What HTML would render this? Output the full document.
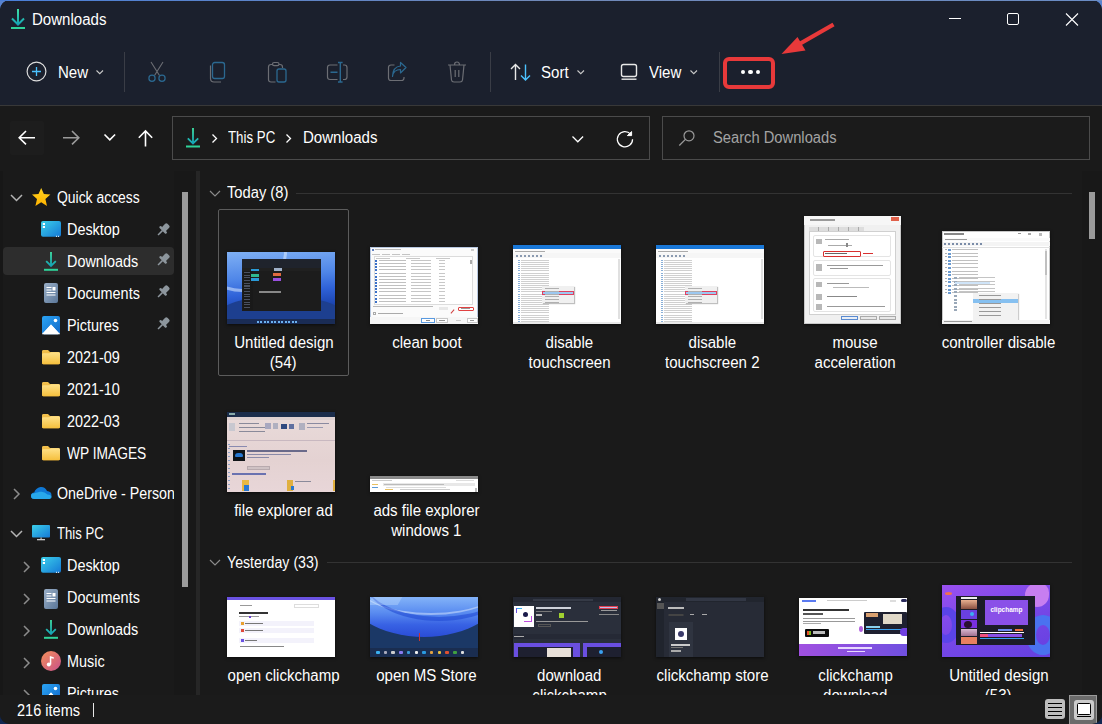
<!DOCTYPE html><html><head><meta charset="utf-8"><style>
*{margin:0;padding:0;box-sizing:border-box}
html,body{width:1102px;height:724px;overflow:hidden;background:linear-gradient(180deg,#5a84d0 0,#4a78c8 40px,#15305e 680px,#112650 724px)}
body{font-family:"Liberation Sans",sans-serif;color:#fff;position:relative}
.win{position:absolute;left:0;top:0;width:1102px;height:724px;border-radius:10px;overflow:hidden;background:#1a1a1a}
.a{position:absolute}
.t{position:absolute;white-space:nowrap;font-size:16px;line-height:16px;color:#fff;transform-origin:left top;transform:scaleX(.94)}
.c{position:absolute;white-space:nowrap;font-size:16px;line-height:20px;color:#fff;text-align:center}
.c span{display:inline-block;transform:scaleX(.94)}
.sep{position:absolute;width:1px;background:#3a3d46}
svg{position:absolute;overflow:visible}
.th{position:absolute;overflow:hidden;box-shadow:0 1px 3px rgba(0,0,0,.6)}
</style></head><body>
<div class="win">
<div class="a" style="left:0px;top:0px;width:1102px;height:105px;background:#1b202d;"></div>
<div class="a" style="left:0px;top:105px;width:1102px;height:1px;background:#383838;"></div>
<svg style="left:0;top:0" width="1" height="1"><defs><linearGradient id="dg" x1="0" y1="0" x2="0" y2="1"><stop offset="0" stop-color="#3fe3a4"/><stop offset="1" stop-color="#14a3b5"/></linearGradient><linearGradient id="deskg" x1="0" y1="0" x2="1" y2="1"><stop offset="0" stop-color="#3cd0ea"/><stop offset="1" stop-color="#1478d6"/></linearGradient><linearGradient id="docg" x1="0" y1="0" x2="1" y2="1"><stop offset="0" stop-color="#9bb0c8"/><stop offset="1" stop-color="#5a7698"/></linearGradient><linearGradient id="picg" x1="0" y1="0" x2="1" y2="1"><stop offset="0" stop-color="#2aa4f4"/><stop offset="1" stop-color="#1268c8"/></linearGradient><linearGradient id="fold" x1="0" y1="0" x2="0" y2="1"><stop offset="0" stop-color="#ffe28a"/><stop offset="1" stop-color="#f5bf3c"/></linearGradient><linearGradient id="foldb" x1="0" y1="0" x2="0" y2="1"><stop offset="0" stop-color="#f2c14e"/><stop offset="1" stop-color="#e8a92a"/></linearGradient><linearGradient id="musg" x1="0" y1="0" x2="1" y2="1"><stop offset="0" stop-color="#f5905a"/><stop offset="1" stop-color="#c8508a"/></linearGradient><linearGradient id="starg" x1="0" y1="0" x2="0" y2="1"><stop offset="0" stop-color="#ffd21f"/><stop offset="1" stop-color="#ffb300"/></linearGradient><linearGradient id="cloudg" x1="0" y1="0" x2="0" y2="1"><stop offset="0" stop-color="#0a6fd0"/><stop offset="1" stop-color="#2f9ef0"/></linearGradient></defs></svg>
<svg style="left:0px;top:0px" width="40" height="40" viewBox="0 0 40 40"><path d="M18 9V24M12 18.5L18 24.5L24 18.5" stroke="url(#dg)" stroke-width="2" fill="none"/><rect x="11" y="27" width="14" height="2" fill="#2fd39a"/></svg>
<div class="t" style="left:32px;top:12.30px">Downloads</div>
<div class="a" style="left:949px;top:18px;width:12px;height:1px;background:#fff;"></div>
<div class="a" style="left:1007px;top:13px;width:12px;height:12px;border:1px solid #fff;border-radius:2px"></div>
<svg style="left:1065px;top:12px" width="16" height="16" viewBox="0 0 16 16"><path d="M1 1.5L13 13.5M13 1.5L1 13.5" stroke="#fff" stroke-width="1.1"/></svg>
<svg style="left:26px;top:61px" width="22" height="22" viewBox="0 0 22 22"><circle cx="10.5" cy="10.5" r="9.4" stroke="#dcdcdc" stroke-width="1.2" fill="none"/><path d="M10.5 6V15M6 10.5H15" stroke="#4cc2ff" stroke-width="1.3"/></svg>
<div class="t" style="left:57.5px;top:65.30px">New</div>
<svg style="left:95.5px;top:70px" width="9" height="6" viewBox="0 0 9 6"><path d="M0.5 0.5L3.75 3.75L7 0.5" stroke="#c8c8c8" stroke-width="1.1" fill="none"/></svg>
<div class="sep" style="left:124px;top:52px;height:40px"></div>
<svg style="left:146px;top:60px" width="24" height="24" viewBox="0 0 24 24"><path d="M5 2L13.5 15.5M17 2L8.5 15.5" stroke="#6c6e74" stroke-width="1.1" fill="none"/><circle cx="6" cy="18.3" r="3.1" stroke="#2b6890" stroke-width="1.25" fill="none"/><circle cx="16" cy="18.3" r="3.1" stroke="#2b6890" stroke-width="1.25" fill="none"/></svg>
<svg style="left:207px;top:60px" width="24" height="24" viewBox="0 0 24 24"><path d="M3.5 5.5V18.5Q3.5 22 7 22H14" stroke="#6c6e74" stroke-width="1.2" fill="none"/><rect x="5.5" y="2.5" width="12" height="16" rx="2.2" stroke="#2b6890" stroke-width="1.3" fill="none"/></svg>
<svg style="left:267px;top:60px" width="24" height="24" viewBox="0 0 24 24"><path d="M8.5 22H4Q1.5 22 1.5 19.5V7Q1.5 4.5 4 4.5H5.5M12 4.5H13Q15.5 4.5 15.5 7V8" stroke="#6c6e74" stroke-width="1.2" fill="none"/><rect x="5.5" y="2.5" width="6.5" height="3.2" rx="1.6" stroke="#6c6e74" stroke-width="1.2" fill="none"/><rect x="10" y="9" width="9" height="13" rx="2" stroke="#2b6890" stroke-width="1.3" fill="none"/></svg>
<svg style="left:326px;top:60px" width="26" height="24" viewBox="0 0 26 24"><path d="M11.5 19.5H4Q1.5 19.5 1.5 17V7.5Q1.5 5 4 5H11.5M17 5H18.5Q21 5 21 7.5V17Q21 19.5 18.5 19.5H17" stroke="#6c6e74" stroke-width="1.2" fill="none"/><path d="M14.3 2.5V22M12 2.5H16.6M12 22H16.6M4.5 12.2H11.5" stroke="#2b6890" stroke-width="1.4" fill="none"/></svg>
<svg style="left:387px;top:60px" width="24" height="24" viewBox="0 0 24 24"><path d="M7.5 5H4Q1.5 5 1.5 7.5V18Q1.5 20.5 4 20.5H14.5Q17 20.5 17 18V17" stroke="#6c6e74" stroke-width="1.2" fill="none"/><path d="M5.5 16.5Q6.5 9.5 13.5 9.5V13L19 7.5L13.5 2.5V6Q6 6.5 5.5 16.5Z" stroke="#2b6890" stroke-width="1.2" fill="none" stroke-linejoin="round"/></svg>
<svg style="left:447px;top:60px" width="24" height="24" viewBox="0 0 24 24"><path d="M1 5H19M7.5 5Q7.5 2 10 2Q12.5 2 12.5 5M3 5L4.5 20Q4.8 22 7 22H13Q15.2 22 15.5 20L17 5M8.2 10V17M11.8 10V17" stroke="#6c6e74" stroke-width="1.2" fill="none"/></svg>
<div class="sep" style="left:490px;top:52px;height:40px"></div>
<svg style="left:509px;top:62px" width="26" height="20" viewBox="0 0 26 20"><path d="M6.5 18V2.5M2 7L6.5 2.5L11 7" stroke="#e8e8e8" stroke-width="1.4" fill="none"/><path d="M16.5 2.5V18M12 13.5L16.5 18L21 13.5" stroke="#4cc2ff" stroke-width="1.4" fill="none"/></svg>
<div class="t" style="left:541px;top:65.30px">Sort</div>
<svg style="left:576.5px;top:70px" width="9" height="6" viewBox="0 0 9 6"><path d="M0.5 0.5L3.75 3.75L7 0.5" stroke="#c8c8c8" stroke-width="1.1" fill="none"/></svg>
<svg style="left:619px;top:62px" width="20" height="20" viewBox="0 0 20 20"><rect x="2.5" y="2.5" width="15" height="12" rx="2" stroke="#e8e8e8" stroke-width="1.4" fill="none"/><path d="M2.5 17.2H17.5" stroke="#e8e8e8" stroke-width="1.4"/></svg>
<div class="t" style="left:649px;top:65.30px">View</div>
<svg style="left:689.5px;top:70px" width="9" height="6" viewBox="0 0 9 6"><path d="M0.5 0.5L3.75 3.75L7 0.5" stroke="#c8c8c8" stroke-width="1.1" fill="none"/></svg>
<div class="sep" style="left:719px;top:52px;height:40px"></div>
<div class="a" style="left:723px;top:57px;width:52px;height:32px;border:4px solid #e8393a;border-radius:6px"></div>
<div class="a" style="left:740.5px;top:69.8px;width:4.6px;height:4.6px;border-radius:50%;background:#fff"></div>
<div class="a" style="left:748.1px;top:69.8px;width:4.6px;height:4.6px;border-radius:50%;background:#fff"></div>
<div class="a" style="left:755.9000000000001px;top:69.8px;width:4.6px;height:4.6px;border-radius:50%;background:#fff"></div>
<svg style="left:0px;top:0px" width="1102" height="100" viewBox="0 0 1102 100"><path d="M833.5 24.5L795 46.5" stroke="#e8393a" stroke-width="4.2" stroke-linecap="butt"/><path d="M781.5 54L797.5 37L805.5 50.5Z" fill="#e8393a"/></svg>
<div class="a" style="left:10px;top:121px;width:34px;height:34px;background:#1d1d1d;border-radius:2px"></div>
<svg style="left:16px;top:128px" width="22" height="22" viewBox="0 0 22 22"><path d="M19 9.7H3.5M10 3L3.2 9.7L10 16.4" stroke="#fff" stroke-width="1.6" fill="none"/></svg>
<svg style="left:60px;top:128px" width="22" height="22" viewBox="0 0 22 22"><path d="M3 9.7H18.5M12 3L18.8 9.7L12 16.4" stroke="#9a9a9a" stroke-width="1.6" fill="none"/></svg>
<svg style="left:102px;top:132px" width="16" height="12" viewBox="0 0 16 12"><path d="M2.5 2.5L7.8 7.8L13.1 2.5" stroke="#fff" stroke-width="1.6" fill="none"/></svg>
<svg style="left:136px;top:128px" width="20" height="22" viewBox="0 0 20 22"><path d="M9.5 18.5V3M2.8 9.7L9.5 3L16.2 9.7" stroke="#fff" stroke-width="1.6" fill="none"/></svg>
<div class="a" style="left:172px;top:116px;width:478px;height:44px;border:1px solid #4b4b4b;background:#1b1b1b"></div>
<svg style="left:184px;top:126px" width="20" height="24" viewBox="0 0 20 24"><path d="M9 2V17.5M3.8 12.3L9 17.5L14.2 12.3" stroke="url(#dg)" stroke-width="1.8" fill="none"/><rect x="2" y="19.5" width="14" height="2" fill="#2fd39a"/></svg>
<svg style="left:210px;top:133px" width="10" height="12" viewBox="0 0 10 12"><path d="M2.5 1.5L6.5 5.5L2.5 9.5" stroke="#fff" stroke-width="1.3" fill="none"/></svg>
<div class="t" style="left:228px;top:130.30px;transform:scaleX(0.83)">This PC</div>
<svg style="left:284px;top:133px" width="10" height="12" viewBox="0 0 10 12"><path d="M2.5 1.5L6.5 5.5L2.5 9.5" stroke="#fff" stroke-width="1.3" fill="none"/></svg>
<div class="t" style="left:302.5px;top:130.30px">Downloads</div>
<svg style="left:570px;top:133.5px" width="16" height="12" viewBox="0 0 16 12"><path d="M2.5 2.5L7.8 7.8L13.1 2.5" stroke="#fff" stroke-width="1.3" fill="none"/></svg>
<svg style="left:615px;top:129px" width="22" height="22" viewBox="0 0 22 22"><path d="M17.55 10.2A7.6 7.6 0 1 1 15.6 5.2" stroke="#fff" stroke-width="1.25" fill="none"/><path d="M16.6 2.6V6.6H12.4Z" stroke="#fff" stroke-width="1" fill="#fff" stroke-linejoin="round"/></svg>
<div class="a" style="left:662px;top:116px;width:428px;height:44px;border:1px solid #4b4b4b;background:#1b1b1b"></div>
<svg style="left:676px;top:128px" width="22" height="22" viewBox="0 0 22 22"><circle cx="13" cy="7.8" r="5" stroke="#9a9a9a" stroke-width="1.2" fill="none"/><path d="M9.4 11.4L3.3 17.5" stroke="#9a9a9a" stroke-width="1.3"/></svg>
<div class="t" style="left:713px;top:130.30px;color:#a3a3a3;transform:scaleX(0.92)">Search Downloads</div>
<div class="a" style="left:0px;top:171px;width:3px;height:524px;background:#171717;"></div>
<div class="a" style="left:174px;top:171px;width:22px;height:524px;background:#181818;"></div>
<div class="a" style="left:182px;top:192px;width:6px;height:395px;background:#9b9b9b;"></div>
<div class="a" style="left:196px;top:171px;width:4px;height:524px;background:#262626;"></div>
<div class="a" style="left:3px;top:247px;width:171px;height:28px;background:#2d2d2d;border-radius:4px"></div>
<svg style="left:10px;top:194px" width="14" height="8" viewBox="0 0 14 8"><path d="M1 1L6.5 6.5L12 1" stroke="#b4b4b4" stroke-width="1.5" fill="none"/></svg>
<svg style="left:32px;top:188px" width="19" height="19" viewBox="0 0 19 19"><path d="M9.2 0L11.9 6.1L18.4 6.6L13.4 11L15 17.9L9.2 14.3L3.4 17.9L5 11L0 6.6L6.5 6.1Z" fill="url(#starg)"/></svg>
<div class="t" style="left:56.5px;top:190.30px;transform:scaleX(0.87)">Quick access</div>
<svg style="left:41px;top:221px" width="20" height="16" viewBox="0 0 20 16"><rect x="0" y="0" width="20" height="15.8" rx="2" fill="url(#deskg)"/><rect x="1.8" y="2" width="2.2" height="2" fill="#fff"/><rect x="1.8" y="5" width="2.2" height="2" fill="#fff"/><rect x="15" y="14.8" width="1" height="1" fill="#fff"/><rect x="17" y="14.8" width="1" height="1" fill="#fff"/></svg>
<div class="t" style="left:66.5px;top:222.30px;transform:scaleX(0.9)">Desktop</div>
<svg style="left:156px;top:222.5px" width="14" height="14" viewBox="0 0 14 14"><g transform="rotate(45 7 7)" fill="#8d969d"><rect x="4.2" y="-0.5" width="5.6" height="7" rx="1.6"/><rect x="2.2" y="5.6" width="9.6" height="2.4" rx="1"/><rect x="6.25" y="7.5" width="1.5" height="6.5"/></g></svg>
<svg style="left:44px;top:251px" width="14" height="20" viewBox="0 0 14 20"><path d="M7 1V15M2.2 10.2L7 15L11.8 10.2" stroke="url(#dg)" stroke-width="1.8" fill="none"/><rect x="0" y="17.8" width="14" height="2" fill="#2fd39a"/></svg>
<div class="t" style="left:66.5px;top:254.30px;transform:scaleX(0.9)">Downloads</div>
<svg style="left:156px;top:252.5px" width="14" height="14" viewBox="0 0 14 14"><g transform="rotate(45 7 7)" fill="#8d969d"><rect x="4.2" y="-0.5" width="5.6" height="7" rx="1.6"/><rect x="2.2" y="5.6" width="9.6" height="2.4" rx="1"/><rect x="6.25" y="7.5" width="1.5" height="6.5"/></g></svg>
<svg style="left:44px;top:283px" width="14" height="20" viewBox="0 0 14 20"><rect x="0" y="0" width="14" height="20" rx="2" fill="url(#docg)"/><rect x="2.5" y="4" width="5" height="1" fill="#fff"/><rect x="2.5" y="6.5" width="5" height="1" fill="#fff"/><rect x="8.5" y="4" width="3" height="3.5" fill="#fff"/><rect x="2.5" y="9" width="9" height="1" fill="#fff"/><rect x="2.5" y="11.5" width="9" height="1" fill="#fff"/></svg>
<div class="t" style="left:66.5px;top:286.30px;transform:scaleX(0.9)">Documents</div>
<svg style="left:156px;top:284.5px" width="14" height="14" viewBox="0 0 14 14"><g transform="rotate(45 7 7)" fill="#8d969d"><rect x="4.2" y="-0.5" width="5.6" height="7" rx="1.6"/><rect x="2.2" y="5.6" width="9.6" height="2.4" rx="1"/><rect x="6.25" y="7.5" width="1.5" height="6.5"/></g></svg>
<svg style="left:42px;top:315.7px" width="18" height="18.3" viewBox="0 0 18 18.3"><rect x="0" y="0" width="18" height="18.3" rx="2" fill="url(#picg)"/><path d="M0 18.3L9 8.5L18 18.3Z" fill="#fff"/><path d="M0 18.3L9 8.5L18 18.3L18 16.3Q18 18.3 16 18.3H2Q0 18.3 0 16.3Z" fill="#fff"/><circle cx="13.5" cy="4.5" r="1.8" fill="#fff"/></svg>
<div class="t" style="left:66.5px;top:318.30px;transform:scaleX(0.9)">Pictures</div>
<svg style="left:156px;top:317.2px" width="14" height="14" viewBox="0 0 14 14"><g transform="rotate(45 7 7)" fill="#8d969d"><rect x="4.2" y="-0.5" width="5.6" height="7" rx="1.6"/><rect x="2.2" y="5.6" width="9.6" height="2.4" rx="1"/><rect x="6.25" y="7.5" width="1.5" height="6.5"/></g></svg>
<svg style="left:42px;top:350px" width="18" height="14.3" viewBox="0 0 18 14.3"><path d="M0 1.5Q0 0 1.5 0H6L8 2H16.5Q18 2 18 3.5V12.8Q18 14.3 16.5 14.3H1.5Q0 14.3 0 12.8Z" fill="url(#foldb)"/><path d="M0 4.5Q0 3.2 1.5 3.2H7.5L9 2.2H16.5Q18 2.2 18 3.7V12.8Q18 14.3 16.5 14.3H1.5Q0 14.3 0 12.8Z" fill="url(#fold)"/></svg>
<div class="t" style="left:66.5px;top:350.30px;transform:scaleX(0.9)">2021-09</div>
<svg style="left:42px;top:382px" width="18" height="14.3" viewBox="0 0 18 14.3"><path d="M0 1.5Q0 0 1.5 0H6L8 2H16.5Q18 2 18 3.5V12.8Q18 14.3 16.5 14.3H1.5Q0 14.3 0 12.8Z" fill="url(#foldb)"/><path d="M0 4.5Q0 3.2 1.5 3.2H7.5L9 2.2H16.5Q18 2.2 18 3.7V12.8Q18 14.3 16.5 14.3H1.5Q0 14.3 0 12.8Z" fill="url(#fold)"/></svg>
<div class="t" style="left:66.5px;top:382.30px;transform:scaleX(0.9)">2021-10</div>
<svg style="left:42px;top:414px" width="18" height="14.3" viewBox="0 0 18 14.3"><path d="M0 1.5Q0 0 1.5 0H6L8 2H16.5Q18 2 18 3.5V12.8Q18 14.3 16.5 14.3H1.5Q0 14.3 0 12.8Z" fill="url(#foldb)"/><path d="M0 4.5Q0 3.2 1.5 3.2H7.5L9 2.2H16.5Q18 2.2 18 3.7V12.8Q18 14.3 16.5 14.3H1.5Q0 14.3 0 12.8Z" fill="url(#fold)"/></svg>
<div class="t" style="left:66.5px;top:414.30px;transform:scaleX(0.9)">2022-03</div>
<svg style="left:42px;top:446px" width="18" height="14.3" viewBox="0 0 18 14.3"><path d="M0 1.5Q0 0 1.5 0H6L8 2H16.5Q18 2 18 3.5V12.8Q18 14.3 16.5 14.3H1.5Q0 14.3 0 12.8Z" fill="url(#foldb)"/><path d="M0 4.5Q0 3.2 1.5 3.2H7.5L9 2.2H16.5Q18 2.2 18 3.7V12.8Q18 14.3 16.5 14.3H1.5Q0 14.3 0 12.8Z" fill="url(#fold)"/></svg>
<div class="t" style="left:66.5px;top:446.30px;transform:scaleX(0.86)">WP IMAGES</div>
<svg style="left:12.5px;top:487.5px" width="8" height="12" viewBox="0 0 8 12"><path d="M1 1L6 6L1 11" stroke="#8c8c8c" stroke-width="1.5" fill="none"/></svg>
<svg style="left:30.5px;top:486px" width="21" height="13" viewBox="0 0 21 13"><path d="M3.5 13Q0 13 0 9.8Q0 6.8 3.2 6.5Q4.5 2 9.5 1Q14 0.5 16 5Q20.5 5.5 20.5 9.3Q20.5 13 17 13Z" fill="#0f78d4"/><path d="M3.5 13Q0 13 0 10Q0 7.5 3 7.3L9 5.8Q13 5 16.5 8.5Q20.5 8.8 20.5 11Q20.5 13 17 13Z" fill="#28a8ea"/></svg>
<div class="a" style="left:0;top:480px;width:174px;height:30px;overflow:hidden">
<div class="t" style="left:56.5px;top:6.30px;transform:scaleX(0.89)">OneDrive - Personal</div>
</div>
<svg style="left:10px;top:530px" width="14" height="8" viewBox="0 0 14 8"><path d="M1 1L6.5 6.5L12 1" stroke="#b4b4b4" stroke-width="1.5" fill="none"/></svg>
<svg style="left:32px;top:525px" width="18" height="16" viewBox="0 0 18 16"><rect x="0" y="0" width="18" height="12.5" rx="1" fill="url(#deskg)"/><rect x="8.5" y="12.5" width="1.2" height="2" fill="#bbb"/><rect x="5" y="14" width="8" height="1.3" fill="#ccc"/></svg>
<div class="t" style="left:56.5px;top:526.30px;transform:scaleX(0.82)">This PC</div>
<svg style="left:22.5px;top:560.5px" width="8" height="12" viewBox="0 0 8 12"><path d="M1 1L6 6L1 11" stroke="#8c8c8c" stroke-width="1.5" fill="none"/></svg>
<svg style="left:41px;top:557px" width="20" height="16" viewBox="0 0 20 16"><rect x="0" y="0" width="20" height="15.8" rx="2" fill="url(#deskg)"/><rect x="1.8" y="2" width="2.2" height="2" fill="#fff"/><rect x="1.8" y="5" width="2.2" height="2" fill="#fff"/><rect x="15" y="14.8" width="1" height="1" fill="#fff"/><rect x="17" y="14.8" width="1" height="1" fill="#fff"/></svg>
<div class="t" style="left:66.5px;top:558.30px;transform:scaleX(0.9)">Desktop</div>
<svg style="left:22.5px;top:592.5px" width="8" height="12" viewBox="0 0 8 12"><path d="M1 1L6 6L1 11" stroke="#8c8c8c" stroke-width="1.5" fill="none"/></svg>
<svg style="left:44px;top:589px" width="14" height="20" viewBox="0 0 14 20"><rect x="0" y="0" width="14" height="20" rx="2" fill="url(#docg)"/><rect x="2.5" y="4" width="5" height="1" fill="#fff"/><rect x="2.5" y="6.5" width="5" height="1" fill="#fff"/><rect x="8.5" y="4" width="3" height="3.5" fill="#fff"/><rect x="2.5" y="9" width="9" height="1" fill="#fff"/><rect x="2.5" y="11.5" width="9" height="1" fill="#fff"/></svg>
<div class="t" style="left:66.5px;top:590.30px;transform:scaleX(0.9)">Documents</div>
<svg style="left:22.5px;top:624.5px" width="8" height="12" viewBox="0 0 8 12"><path d="M1 1L6 6L1 11" stroke="#8c8c8c" stroke-width="1.5" fill="none"/></svg>
<svg style="left:44px;top:619px" width="14" height="20" viewBox="0 0 14 20"><path d="M7 1V15M2.2 10.2L7 15L11.8 10.2" stroke="url(#dg)" stroke-width="1.8" fill="none"/><rect x="0" y="17.8" width="14" height="2" fill="#2fd39a"/></svg>
<div class="t" style="left:66.5px;top:622.30px;transform:scaleX(0.9)">Downloads</div>
<svg style="left:22.5px;top:656.5px" width="8" height="12" viewBox="0 0 8 12"><path d="M1 1L6 6L1 11" stroke="#8c8c8c" stroke-width="1.5" fill="none"/></svg>
<svg style="left:41px;top:651px" width="20" height="20" viewBox="0 0 20 20"><circle cx="10" cy="10" r="10" fill="url(#musg)"/><path d="M8.8 13.5V5L12.8 6.2V7.8L10.3 7.2V13.5" fill="#fff"/><circle cx="7.8" cy="13.6" r="2" fill="#fff"/></svg>
<div class="t" style="left:66.5px;top:654.30px;transform:scaleX(0.9)">Music</div>
<svg style="left:22.5px;top:688.5px" width="8" height="12" viewBox="0 0 8 12"><path d="M1 1L6 6L1 11" stroke="#8c8c8c" stroke-width="1.5" fill="none"/></svg>
<svg style="left:42px;top:683.7px" width="18" height="18.3" viewBox="0 0 18 18.3"><rect x="0" y="0" width="18" height="18.3" rx="2" fill="url(#picg)"/><path d="M0 18.3L9 8.5L18 18.3Z" fill="#fff"/><path d="M0 18.3L9 8.5L18 18.3L18 16.3Q18 18.3 16 18.3H2Q0 18.3 0 16.3Z" fill="#fff"/><circle cx="13.5" cy="4.5" r="1.8" fill="#fff"/></svg>
<div class="t" style="left:66.5px;top:686.30px;transform:scaleX(0.9)">Pictures</div>
<svg style="left:209px;top:190px" width="12" height="7" viewBox="0 0 12 7"><path d="M1 1L6 6L11 1" stroke="#8a8a8a" stroke-width="1.2" fill="none"/></svg>
<div class="t" style="left:227px;top:184.90px;transform:scaleX(0.92)">Today (8)</div>
<div class="a" style="left:296px;top:193px;width:776px;height:1px;background:#333;"></div>
<svg style="left:209px;top:559px" width="12" height="7" viewBox="0 0 12 7"><path d="M1 1L6 6L11 1" stroke="#8a8a8a" stroke-width="1.2" fill="none"/></svg>
<div class="t" style="left:227px;top:554.70px;transform:scaleX(0.885)">Yesterday (33)</div>
<div class="a" style="left:327px;top:562px;width:745px;height:1px;background:#333;"></div>
<div class="a" style="left:1082px;top:171px;width:20px;height:524px;background:#181818;"></div>
<div class="a" style="left:1089px;top:192px;width:6px;height:47px;background:#9b9b9b;"></div>
<div class="a" style="left:218px;top:209px;width:131px;height:167px;border:1px solid #5c5c5c;border-radius:2px"></div>
<div class="th" style="left:227px;top:252px;width:108px;height:72px;background:#2f62d8"><div class="a" style="left:0px;top:0px;width:108px;height:72px;background:linear-gradient(175deg,#7fb0f4 0%,#4f86e8 35%,#2f62d8 55%,#1c45b0 75%,#173a86 100%);"></div><div class="a" style="left:-30px;top:-40px;width:90px;height:80px;background:transparent;border-radius:50%;border:3px solid rgba(220,235,255,.55)"></div><div class="a" style="left:-10px;top:44px;width:128px;height:40px;background:#1d3f8f;border-radius:50% 50% 0 0"></div><div class="a" style="left:0px;top:67px;width:108px;height:5px;background:#1a2c55;"></div><div class="a" style="left:15px;top:6.5px;width:79px;height:52.5px;background:#1c1c1c;"></div><div class="a" style="left:15px;top:6.5px;width:79px;height:9px;background:#1f232c;"></div><div class="a" style="left:15px;top:15.5px;width:79px;height:3px;background:#202020;"></div><div class="a" style="left:16px;top:18.5px;width:10px;height:39px;background:#191919;"></div><div class="a" style="left:24px;top:17px;width:8px;height:2px;background:#2a9ad8;"></div><div class="a" style="left:47px;top:16px;width:8px;height:3px;background:#9fb0c8;"></div><div class="a" style="left:24px;top:22px;width:8px;height:3px;background:#2fb890;"></div><div class="a" style="left:46px;top:21px;width:8px;height:3px;background:#e06a40;"></div><div class="a" style="left:24px;top:26px;width:8px;height:3px;background:#2a9ad8;"></div><div class="a" style="left:46px;top:26px;width:8px;height:3px;background:#9a50e0;"></div><div class="a" style="left:32px;top:39px;width:22px;height:2px;background:#888;"></div><div class="a" style="left:17px;top:20px;width:6px;height:37.800000000000004px;background:repeating-linear-gradient(180deg,#4a5060 0,#4a5060 1px,transparent 1px,transparent 2.7px);"></div><div class="a" style="left:30px;top:69px;width:40px;height:1.5px;background:repeating-linear-gradient(90deg,#6ab0f0 0,#6ab0f0 2px,transparent 2px,transparent 3.5px);"></div></div>
<div class="th" style="left:370px;top:247px;width:108px;height:77px;background:#fff"><div class="a" style="left:0px;top:0px;width:108px;height:77px;background:#fbfbfb;border:1px solid #b8c8e0"></div><div class="a" style="left:1.5px;top:1.5px;width:2px;height:2px;background:#6080c0;"></div><div class="a" style="left:5px;top:2px;width:26px;height:1.2px;background:#bbb;"></div><div class="a" style="left:101px;top:1.5px;width:3px;height:2px;background:#ccc;"></div><div class="a" style="left:2px;top:6.5px;width:40px;height:1.5px;background:repeating-linear-gradient(90deg,#c4c4c4 0,#c4c4c4 8px,transparent 8px,transparent 10px);"></div><div class="a" style="left:3.5px;top:9px;width:99.5px;height:48.5px;background:#fff;border:1px solid #dcdcdc"></div><div class="a" style="left:6px;top:10.5px;width:90px;height:1px;background:repeating-linear-gradient(90deg,#c8c8c8 0,#c8c8c8 14px,transparent 14px,transparent 30px);"></div><div class="a" style="left:5px;top:13px;width:1.8px;height:44.1px;background:repeating-linear-gradient(180deg,#3a70c8 0,#3a70c8 1.8px,transparent 1.8px,transparent 3.15px);"></div><div class="a" style="left:9px;top:13.3px;width:27px;height:44.1px;background:repeating-linear-gradient(180deg,#c0c0c0 0,#c0c0c0 1px,transparent 1px,transparent 3.15px);"></div><div class="a" style="left:41px;top:13.3px;width:20px;height:44.1px;background:repeating-linear-gradient(180deg,#c6c6c6 0,#c6c6c6 1px,transparent 1px,transparent 3.15px);"></div><div class="a" style="left:69px;top:13.3px;width:6px;height:44.1px;background:repeating-linear-gradient(180deg,#c8c8c8 0,#c8c8c8 1px,transparent 1px,transparent 3.15px);"></div><div class="a" style="left:100px;top:13px;width:1.5px;height:4px;background:#aaa;"></div><div class="a" style="left:3px;top:59px;width:60px;height:1px;background:#b8b8b8;"></div><div class="a" style="left:69px;top:60px;width:9px;height:2.5px;background:#e8e8e8;"></div><div class="a" style="left:87.5px;top:59.5px;width:16.5px;height:4.5px;background:#fff;border:1.2px solid #e04040;border-radius:1px"></div><div class="a" style="left:91px;top:61.3px;width:9px;height:0.8px;background:#999;"></div><div class="a" style="left:80px;top:64px;width:5px;height:1px;background:#d04040;transform:rotate(-50deg)"></div><div class="a" style="left:3px;top:65px;width:3px;height:3px;background:#fff;border:1px solid #aaa"></div><div class="a" style="left:8px;top:66px;width:25px;height:1px;background:#aaa;"></div><div class="a" style="left:0px;top:70px;width:108px;height:7px;background:#f6f6f6;"></div><div class="a" style="left:51px;top:71px;width:13.5px;height:4.5px;background:#fff;border:1px solid #5a9ae0"></div><div class="a" style="left:56px;top:72.8px;width:4px;height:0.8px;background:#888;"></div><div class="a" style="left:66px;top:71px;width:12px;height:4.5px;background:#fff;border:1px solid #c8c8c8"></div><div class="a" style="left:69px;top:72.8px;width:6px;height:0.8px;background:#999;"></div><div class="a" style="left:83px;top:71px;width:11.5px;height:4.5px;background:#f6f6f6;"></div><div class="a" style="left:86px;top:72.8px;width:5px;height:0.8px;background:#ccc;"></div><div class="a" style="left:97px;top:71px;width:11px;height:4.5px;background:#fff;border:1px solid #c8c8c8"></div><div class="a" style="left:100px;top:72.8px;width:4px;height:0.8px;background:#999;"></div></div>
<div class="th" style="left:513px;top:245px;width:108px;height:79px;background:#fff"><div class="a" style="left:0px;top:0px;width:108px;height:4px;background:#1a78d8;"></div><div class="a" style="left:0px;top:4px;width:108px;height:4px;background:#fafafa;"></div><div class="a" style="left:2px;top:5.5px;width:30px;height:1px;background:#aaa;"></div><div class="a" style="left:0px;top:8px;width:108px;height:5px;background:#f6f6f6;"></div><div class="a" style="left:3px;top:9.5px;width:26px;height:2px;background:repeating-linear-gradient(90deg,#8a9ab0 0,#8a9ab0 2px,transparent 2px,transparent 4px);"></div><div class="a" style="left:5px;top:15px;width:2px;height:63.0px;background:repeating-linear-gradient(180deg,#8ab0d8 0,#8ab0d8 1px,transparent 1px,transparent 2.1px);"></div><div class="a" style="left:8px;top:15px;width:28px;height:63.0px;background:repeating-linear-gradient(180deg,#d0d0d0 0,#d0d0d0 1px,transparent 1px,transparent 2.1px);"></div><div class="a" style="left:105px;top:14px;width:2px;height:60px;background:#e0e0e0;"></div><div class="a" style="left:29px;top:41px;width:32px;height:17px;background:#f0f0f0;box-shadow:1px 1px 1px rgba(0,0,0,.25)"></div><div class="a" style="left:29px;top:45.5px;width:32px;height:4.5px;background:#9cc8f0;border:1px solid #e04060"></div><div class="a" style="left:32px;top:43px;width:14px;height:16.799999999999997px;background:repeating-linear-gradient(180deg,#b0b0b0 0,#b0b0b0 1px,transparent 1px,transparent 2.8px);"></div><div class="a" style="left:0px;top:77px;width:108px;height:2px;background:#e8e8e8;"></div></div>
<div class="th" style="left:656px;top:245px;width:108px;height:79px;background:#fff"><div class="a" style="left:0px;top:0px;width:108px;height:4px;background:#1a78d8;"></div><div class="a" style="left:0px;top:4px;width:108px;height:4px;background:#fafafa;"></div><div class="a" style="left:2px;top:5.5px;width:30px;height:1px;background:#aaa;"></div><div class="a" style="left:0px;top:8px;width:108px;height:5px;background:#f6f6f6;"></div><div class="a" style="left:3px;top:9.5px;width:26px;height:2px;background:repeating-linear-gradient(90deg,#8a9ab0 0,#8a9ab0 2px,transparent 2px,transparent 4px);"></div><div class="a" style="left:5px;top:15px;width:2px;height:63.0px;background:repeating-linear-gradient(180deg,#8ab0d8 0,#8ab0d8 1px,transparent 1px,transparent 2.1px);"></div><div class="a" style="left:8px;top:15px;width:28px;height:63.0px;background:repeating-linear-gradient(180deg,#d0d0d0 0,#d0d0d0 1px,transparent 1px,transparent 2.1px);"></div><div class="a" style="left:105px;top:14px;width:2px;height:60px;background:#e0e0e0;"></div><div class="a" style="left:29px;top:41px;width:32px;height:17px;background:#f0f0f0;box-shadow:1px 1px 1px rgba(0,0,0,.25)"></div><div class="a" style="left:29px;top:45.5px;width:32px;height:4.5px;background:#9cc8f0;border:1px solid #e04060"></div><div class="a" style="left:32px;top:43px;width:14px;height:16.799999999999997px;background:repeating-linear-gradient(180deg,#b0b0b0 0,#b0b0b0 1px,transparent 1px,transparent 2.8px);"></div><div class="a" style="left:0px;top:77px;width:108px;height:2px;background:#e8e8e8;"></div></div>
<div class="th" style="left:804px;top:216px;width:97px;height:108px;background:#f0f0f0"><div class="a" style="left:0px;top:0px;width:97px;height:108px;background:#f0f0f0;border:1px solid #c8c8c8"></div><div class="a" style="left:0px;top:0px;width:97px;height:9px;background:#f6f6f6;"></div><div class="a" style="left:6px;top:3px;width:25px;height:1.5px;background:#999;"></div><div class="a" style="left:87px;top:1px;width:8px;height:4px;background:#e0604a;"></div><div class="a" style="left:5px;top:11px;width:55px;height:4px;background:repeating-linear-gradient(90deg,#ddd 0,#ddd 9px,#aaa 9px,#aaa 10px);"></div><div class="a" style="left:5px;top:15px;width:87px;height:84px;background:#fff;border:1px solid #d0d0d0"></div><div class="a" style="left:9px;top:19px;width:78px;height:22px;background:transparent;border:1px solid #e4e4e4;border-radius:2px"></div><div class="a" style="left:12px;top:23px;width:6px;height:5px;background:#b8b8b8;"></div><div class="a" style="left:21px;top:23px;width:24px;height:1px;background:#aaa;"></div><div class="a" style="left:24px;top:29px;width:24px;height:1px;background:#aaa;"></div><div class="a" style="left:42px;top:27px;width:2px;height:4px;background:#888;"></div><div class="a" style="left:19px;top:34.5px;width:38px;height:6.5px;background:transparent;border:1.3px solid #d83030;border-radius:1px"></div><div class="a" style="left:21px;top:37px;width:22px;height:1.2px;background:#666;"></div><div class="a" style="left:59px;top:37px;width:10px;height:1.3px;background:#d83030;"></div><div class="a" style="left:9px;top:44px;width:78px;height:16px;background:transparent;border:1px solid #e4e4e4;border-radius:2px"></div><div class="a" style="left:12px;top:48px;width:6px;height:7px;background:#b8b8b8;"></div><div class="a" style="left:23px;top:49px;width:56px;height:1px;background:#999;"></div><div class="a" style="left:26px;top:52px;width:18px;height:1px;background:#999;"></div><div class="a" style="left:9px;top:62px;width:78px;height:34px;background:transparent;border:1px solid #e4e4e4;border-radius:2px"></div><div class="a" style="left:12px;top:66px;width:6px;height:5px;background:#b8b8b8;"></div><div class="a" style="left:23px;top:67px;width:22px;height:1px;background:#999;"></div><div class="a" style="left:29px;top:71px;width:36px;height:1px;background:#bbb;"></div><div class="a" style="left:12px;top:78px;width:6px;height:6px;background:#b8b8b8;"></div><div class="a" style="left:23px;top:80px;width:30px;height:1px;background:#888;"></div><div class="a" style="left:12px;top:88px;width:6px;height:6px;background:#b8b8b8;"></div><div class="a" style="left:23px;top:90px;width:58px;height:1px;background:#999;"></div><div class="a" style="left:37px;top:100px;width:17px;height:4px;background:#e8eef6;border:1px solid #5a8ad0"></div><div class="a" style="left:56px;top:100px;width:17px;height:4px;background:#e8e8e8;border:1px solid #aaa"></div><div class="a" style="left:75px;top:100px;width:17px;height:4px;background:#e8e8e8;border:1px solid #aaa"></div></div>
<div class="th" style="left:942px;top:231px;width:108px;height:93px;background:#fff"><div class="a" style="left:0px;top:0px;width:108px;height:93px;background:#fff;border:1px solid #c8c8c8"></div><div class="a" style="left:2px;top:2px;width:20px;height:1.5px;background:#888;"></div><div class="a" style="left:76px;top:2px;width:3px;height:1px;background:#999;"></div><div class="a" style="left:86px;top:1.5px;width:3px;height:2px;background:transparent;border:1px solid #aaa"></div><div class="a" style="left:97px;top:1.5px;width:3px;height:3px;background:#bbb;"></div><div class="a" style="left:1px;top:7px;width:108px;height:3px;background:#fafafa;"></div><div class="a" style="left:3px;top:8px;width:22px;height:1px;background:#999;"></div><div class="a" style="left:1px;top:11px;width:108px;height:4px;background:#f4f4f4;"></div><div class="a" style="left:2px;top:12px;width:40px;height:2px;background:repeating-linear-gradient(90deg,#7a8ca8 0,#7a8ca8 2px,transparent 2px,transparent 4px);"></div><div class="a" style="left:0px;top:16px;width:108px;height:1px;background:#e0e0e0;"></div><div class="a" style="left:3px;top:18px;width:1.5px;height:46.800000000000004px;background:repeating-linear-gradient(180deg,#b0b0b0 0,#b0b0b0 1px,transparent 1px,transparent 3.6px);"></div><div class="a" style="left:6px;top:18px;width:2.5px;height:46.800000000000004px;background:repeating-linear-gradient(180deg,#6a9ad0 0,#6a9ad0 2px,transparent 2px,transparent 3.6px);"></div><div class="a" style="left:10px;top:18px;width:26px;height:46.800000000000004px;background:repeating-linear-gradient(180deg,#c0c0c0 0,#c0c0c0 1px,transparent 1px,transparent 3.6px);"></div><div class="a" style="left:12px;top:46px;width:3px;height:36.0px;background:repeating-linear-gradient(180deg,#9aa8b8 0,#9aa8b8 2px,transparent 2px,transparent 3.6px);"></div><div class="a" style="left:17px;top:46px;width:36px;height:18.0px;background:repeating-linear-gradient(180deg,#c4c4c4 0,#c4c4c4 1px,transparent 1px,transparent 3.6px);"></div><div class="a" style="left:13px;top:51px;width:35px;height:2px;background:#cfe4f8;"></div><div class="a" style="left:31px;top:62px;width:45px;height:27px;background:#f2f2f2;box-shadow:1px 1px 1px rgba(0,0,0,.2)"></div><div class="a" style="left:31px;top:67.5px;width:45px;height:4px;background:#86c0f0;"></div><div class="a" style="left:37px;top:64px;width:22px;height:24px;background:repeating-linear-gradient(180deg,#999 0,#999 1px,transparent 1px,transparent 4px);"></div><div class="a" style="left:103px;top:18px;width:2px;height:70px;background:#e4e4e4;"></div><div class="a" style="left:103px;top:20px;width:2px;height:24px;background:#c0c0c0;"></div><div class="a" style="left:0px;top:89px;width:108px;height:4px;background:#f0f0f0;"></div><div class="a" style="left:2px;top:90px;width:28px;height:1px;background:#999;"></div></div>
<div class="th" style="left:227px;top:412px;width:108px;height:80px;background:#fff"><div class="a" style="left:0px;top:0px;width:108px;height:80px;background:linear-gradient(180deg,#e9dbda,#e4d2d2 60%,#e8d6d8);"></div><div class="a" style="left:0px;top:0px;width:108px;height:4.5px;background:#1a2c4a;"></div><div class="a" style="left:2px;top:1px;width:6px;height:2px;background:#8aa;"></div><div class="a" style="left:0px;top:5px;width:108px;height:3px;background:#ddd0d0;"></div><div class="a" style="left:2px;top:11px;width:6px;height:8px;background:#c8c8d0;"></div><div class="a" style="left:12px;top:11px;width:20px;height:1px;background:#8a8a9a;"></div><div class="a" style="left:12px;top:15px;width:26px;height:1px;background:#8a8a9a;"></div><div class="a" style="left:12px;top:19px;width:26px;height:1px;background:#8a8a9a;"></div><div class="a" style="left:38px;top:11px;width:6px;height:6px;background:#a8a8c0;"></div><div class="a" style="left:46px;top:11px;width:5px;height:6px;background:#b0b0c0;"></div><div class="a" style="left:54px;top:12px;width:6px;height:5px;background:#304a80;"></div><div class="a" style="left:62px;top:12px;width:5px;height:5px;background:#6070a0;"></div><div class="a" style="left:72px;top:11px;width:6px;height:7px;background:#b0b0c0;"></div><div class="a" style="left:80px;top:11px;width:22px;height:1px;background:#8a8aa0;"></div><div class="a" style="left:80px;top:15px;width:16px;height:1px;background:#9a9ab0;"></div><div class="a" style="left:0px;top:28px;width:108px;height:1px;background:#c8b8c0;"></div><div class="a" style="left:2px;top:34px;width:18px;height:1px;background:#8a8ab0;"></div><div class="a" style="left:6px;top:37.5px;width:12px;height:11px;background:#101418;"></div><div class="a" style="left:8px;top:41px;width:8px;height:4px;background:#2878d0;border-radius:3px 3px 1px 1px"></div><div class="a" style="left:20px;top:38px;width:60px;height:1.5px;background:#6a6a8a;"></div><div class="a" style="left:20px;top:42px;width:44px;height:1px;background:#8a8aa8;"></div><div class="a" style="left:20px;top:44.5px;width:22px;height:1px;background:#8a8aa8;"></div><div class="a" style="left:20px;top:53.5px;width:23px;height:4.5px;background:#cfc2c4;border:1px solid #b8aaae"></div><div class="a" style="left:5px;top:61px;width:34px;height:1.5px;background:#6a72b0;"></div><div class="a" style="left:15px;top:68px;width:7px;height:11px;background:#e8b840;"></div><div class="a" style="left:17px;top:73px;width:5px;height:6px;background:#2878d0;"></div><div class="a" style="left:60px;top:68px;width:6px;height:11px;background:#e0b040;"></div><div class="a" style="left:64px;top:74px;width:3px;height:4px;background:#2878d0;"></div><div class="a" style="left:68px;top:69px;width:16px;height:1px;background:#8a8a9a;"></div><div class="a" style="left:106px;top:68px;width:2px;height:11px;background:#e0b040;"></div><div class="a" style="left:1px;top:32px;width:2px;height:48px;background:repeating-linear-gradient(180deg,#8aa0c8 0,#8aa0c8 1px,transparent 1px,transparent 4px);"></div></div>
<div class="th" style="left:370px;top:476px;width:108px;height:16px;background:#fff"><div class="a" style="left:0px;top:0px;width:108px;height:16px;background:#fff;"></div><div class="a" style="left:0px;top:0px;width:108px;height:2.5px;background:#8a8a8a;"></div><div class="a" style="left:2px;top:4px;width:20px;height:1.2px;background:#ccc;"></div><div class="a" style="left:86px;top:4px;width:18px;height:1.2px;background:#ddd;"></div><div class="a" style="left:13px;top:7px;width:92px;height:2.5px;background:#e8e8e8;"></div><div class="a" style="left:14px;top:7.5px;width:60px;height:1px;background:#bbb;"></div><div class="a" style="left:2px;top:8px;width:6px;height:1px;background:#e8c060;"></div><div class="a" style="left:2px;top:11px;width:6px;height:1px;background:#5a9ad8;"></div><div class="a" style="left:16px;top:10.5px;width:60px;height:1px;background:#ddd;"></div><div class="a" style="left:15px;top:13px;width:8px;height:1.2px;background:#e8c060;"></div><div class="a" style="left:30px;top:13px;width:50px;height:1px;background:#ccc;"></div><div class="a" style="left:105px;top:12px;width:2px;height:4px;background:#bbb;"></div></div>
<div class="th" style="left:227px;top:597px;width:108px;height:60px;background:#fff"><div class="a" style="left:0px;top:0px;width:108px;height:60px;background:#fff;"></div><div class="a" style="left:0px;top:0px;width:108px;height:2.8px;background:#6a52e2;"></div><div class="a" style="left:13px;top:8px;width:12px;height:1.2px;background:#999;"></div><div class="a" style="left:67px;top:7px;width:25px;height:3.5px;background:transparent;border:1px solid #ddd"></div><div class="a" style="left:12px;top:15px;width:29px;height:2.2px;background:#333;"></div><div class="a" style="left:12px;top:19px;width:20px;height:1.2px;background:#999;"></div><div class="a" style="left:22px;top:18.5px;width:1.5px;height:2px;background:#6a40d0;"></div><div class="a" style="left:12px;top:24px;width:75px;height:4.5px;background:#f3f2fb;"></div><div class="a" style="left:14px;top:25px;width:2.5px;height:2.5px;background:#e8a030;"></div><div class="a" style="left:18px;top:25.8px;width:18px;height:1px;background:#777;"></div><div class="a" style="left:12px;top:31px;width:75px;height:4.5px;background:#f3f2fb;"></div><div class="a" style="left:14px;top:32px;width:2.5px;height:2.5px;background:#e04a3a;"></div><div class="a" style="left:18px;top:32.8px;width:18px;height:1px;background:#777;"></div><div class="a" style="left:12px;top:41px;width:75px;height:4.5px;background:#f3f2fb;"></div><div class="a" style="left:14px;top:42px;width:2.5px;height:2.5px;background:#6a52e2;"></div><div class="a" style="left:18px;top:42.8px;width:12px;height:1px;background:#777;"></div><div class="a" style="left:13px;top:48.5px;width:44px;height:1px;background:#888;"></div></div>
<div class="th" style="left:370px;top:597px;width:108px;height:60px;background:#fff"><div class="a" style="left:0px;top:0px;width:108px;height:60px;background:#1b3866;"></div><div class="a" style="left:-26px;top:-62px;width:160px;height:102px;background:linear-gradient(180deg,#8cbafa 0%,#80b0f8 62%,#5a8cf0 76%,#3862e4 88%,#2a4cd6 100%);border-radius:50%"></div><div class="a" style="left:-14px;top:-48px;width:150px;height:66px;background:transparent;border-radius:50%;border-bottom:2.5px solid rgba(235,245,255,.45)"></div><div class="a" style="left:-6px;top:-60px;width:150px;height:84px;background:transparent;border-radius:50%;border-bottom:4px solid rgba(30,70,210,.55)"></div><div class="a" style="left:0px;top:0px;width:30px;height:8px;background:rgba(200,225,255,.35);transform:skewX(-30deg)"></div><div class="a" style="left:48.5px;top:36px;width:0.9px;height:8px;background:#d03030;"></div><div class="a" style="left:0px;top:51px;width:108px;height:9px;background:#1a2d50;"></div><div class="a" style="left:6.0px;top:53.5px;width:3.5px;height:3.5px;background:#3ab0f0;border-radius:1px"></div><div class="a" style="left:13.7px;top:53.5px;width:3.5px;height:3.5px;background:#aab;border-radius:1px"></div><div class="a" style="left:21.4px;top:53.5px;width:3.5px;height:3.5px;background:#ccc;border-radius:1px"></div><div class="a" style="left:29.1px;top:53.5px;width:3.5px;height:3.5px;background:#8a7af0;border-radius:1px"></div><div class="a" style="left:36.8px;top:53.5px;width:3.5px;height:3.5px;background:#3a9ad8;border-radius:1px"></div><div class="a" style="left:44.5px;top:53.5px;width:3.5px;height:3.5px;background:#eee;border-radius:1px"></div><div class="a" style="left:52.2px;top:53.5px;width:3.5px;height:3.5px;background:#2a9ae0;border-radius:1px"></div><div class="a" style="left:59.9px;top:53.5px;width:3.5px;height:3.5px;background:#e0a040;border-radius:1px"></div><div class="a" style="left:67.6px;top:53.5px;width:3.5px;height:3.5px;background:#e8c040;border-radius:1px"></div><div class="a" style="left:75.3px;top:53.5px;width:3.5px;height:3.5px;background:#e05030;border-radius:1px"></div><div class="a" style="left:83.0px;top:53.5px;width:3.5px;height:3.5px;background:#40a040;border-radius:1px"></div><div class="a" style="left:90.7px;top:53.5px;width:3.5px;height:3.5px;background:#ddd;border-radius:1px"></div></div>
<div class="th" style="left:513px;top:597px;width:108px;height:60px;background:#fff"><div class="a" style="left:0px;top:0px;width:108px;height:60px;background:#2a2f3b;"></div><div class="a" style="left:0px;top:0px;width:108px;height:5px;background:#232732;"></div><div class="a" style="left:20px;top:1.5px;width:60px;height:2px;background:#353a46;"></div><div class="a" style="left:0.5px;top:8.5px;width:20.5px;height:21.5px;background:#fff;"></div><div class="a" style="left:3px;top:11px;width:6px;height:1.2px;background:#3ab0f0;"></div><div class="a" style="left:2.5px;top:11px;width:1.2px;height:5px;background:#6a52e2;"></div><div class="a" style="left:10px;top:15px;width:5px;height:5px;background:#1a1a4a;border-radius:50%"></div><div class="a" style="left:11px;top:24px;width:8px;height:1.2px;background:#c050e0;"></div><div class="a" style="left:17.5px;top:19px;width:1.2px;height:6px;background:#c050e0;"></div><div class="a" style="left:23px;top:10px;width:35px;height:2px;background:#cfd2da;"></div><div class="a" style="left:23px;top:13.5px;width:16px;height:1px;background:#777;"></div><div class="a" style="left:23px;top:16.5px;width:6px;height:2px;background:#bbb;"></div><div class="a" style="left:46px;top:15.5px;width:5px;height:5.5px;background:#a0d030;"></div><div class="a" style="left:23px;top:23.5px;width:52px;height:1px;background:#999;"></div><div class="a" style="left:25px;top:27px;width:13px;height:2.5px;background:transparent;border:1px solid #555"></div><div class="a" style="left:86px;top:9px;width:19px;height:3px;background:#b8c0f0;border:1px solid #e04050"></div><div class="a" style="left:88px;top:13px;width:16px;height:1px;background:#999;"></div><div class="a" style="left:86px;top:17px;width:20px;height:1px;background:#888;"></div><div class="a" style="left:0px;top:37px;width:108px;height:5px;background:#252935;"></div><div class="a" style="left:0.5px;top:38.5px;width:10px;height:1px;background:#aaa;"></div><div class="a" style="left:0.5px;top:46px;width:66px;height:14px;background:#6a4fe0;"></div><div class="a" style="left:5px;top:50px;width:55px;height:10px;background:#1e2030;"></div><div class="a" style="left:34px;top:51px;width:24px;height:9px;background:#e8e0d8;"></div><div class="a" style="left:69.5px;top:46px;width:38.5px;height:14px;background:#6a4fe0;"></div><div class="a" style="left:74px;top:50px;width:34px;height:10px;background:#1e2030;"></div><div class="a" style="left:86px;top:53px;width:4px;height:4px;background:#3aa0f0;border-radius:50%"></div></div>
<div class="th" style="left:656px;top:597px;width:108px;height:60px;background:#fff"><div class="a" style="left:0px;top:0px;width:108px;height:60px;background:#272b36;"></div><div class="a" style="left:0px;top:0px;width:108px;height:5px;background:#21252e;"></div><div class="a" style="left:30px;top:1.2px;width:60px;height:2.5px;background:#323744;"></div><div class="a" style="left:2px;top:1px;width:3px;height:3px;background:#ccc;border-radius:50%"></div><div class="a" style="left:0px;top:5px;width:7.5px;height:55px;background:#20242d;"></div><div class="a" style="left:0.5px;top:5.5px;width:7px;height:6px;background:#555;"></div><div class="a" style="left:12px;top:10px;width:16px;height:1.6px;background:#bbb;"></div><div class="a" style="left:12px;top:16.5px;width:16px;height:2.5px;background:transparent;border:1px solid #444;border-radius:2px"></div><div class="a" style="left:34px;top:17px;width:4px;height:1px;background:#aaa;"></div><div class="a" style="left:46px;top:17px;width:5px;height:1px;background:#aaa;"></div><div class="a" style="left:13px;top:25px;width:24px;height:35px;background:#2f3440;"></div><div class="a" style="left:19px;top:31px;width:12px;height:12px;background:#fff;"></div><div class="a" style="left:22px;top:34px;width:6px;height:6px;background:#3a3a6a;border-radius:50%"></div><div class="a" style="left:15px;top:47px;width:19px;height:1.5px;background:#ccc;"></div><div class="a" style="left:15px;top:50px;width:12px;height:1px;background:#777;"></div><div class="a" style="left:15px;top:53px;width:10px;height:1.5px;background:#aaa;"></div></div>
<div class="th" style="left:799px;top:598px;width:108px;height:58px;background:#fff"><div class="a" style="left:0px;top:0px;width:108px;height:58px;background:#fff;"></div><div class="a" style="left:3px;top:1.5px;width:14px;height:2px;background:#5a7af0;"></div><div class="a" style="left:28px;top:2px;width:40px;height:1px;background:#ccc;"></div><div class="a" style="left:91px;top:1.5px;width:6px;height:2px;background:transparent;border:1px solid #ddd"></div><div class="a" style="left:102px;top:1px;width:6px;height:3px;background:#2a2a5a;border-radius:2px"></div><div class="a" style="left:4px;top:11px;width:46px;height:2.2px;background:#333;"></div><div class="a" style="left:4px;top:15px;width:20px;height:2px;background:#555;"></div><div class="a" style="left:4px;top:20px;width:52px;height:1px;background:#999;"></div><div class="a" style="left:4px;top:22.5px;width:52px;height:1px;background:#999;"></div><div class="a" style="left:4px;top:25px;width:18px;height:1px;background:#aaa;"></div><div class="a" style="left:6px;top:30.5px;width:24px;height:8px;background:#0c0c0c;border-radius:1px"></div><div class="a" style="left:8px;top:32.5px;width:4px;height:4px;background:linear-gradient(90deg,#e8502a 50%,#7ab820 50%);"></div><div class="a" style="left:14px;top:33px;width:12px;height:3px;background:#bbb;"></div><div class="a" style="left:65px;top:13.5px;width:43px;height:22.5px;background:#1e2030;border-radius:1px"></div><div class="a" style="left:67px;top:15px;width:12px;height:4px;background:#d8a070;"></div><div class="a" style="left:84px;top:15.5px;width:19px;height:10px;background:#e0d8c8;"></div><div class="a" style="left:67px;top:28px;width:14px;height:2px;background:#8ad0f0;"></div><div class="a" style="left:67px;top:31px;width:38px;height:0.8px;background:#3aa0f0;"></div><div class="a" style="left:60px;top:28px;width:4px;height:6px;background:#b060e0;border-radius:50%"></div><div class="a" style="left:101px;top:30px;width:7px;height:8px;background:#7040e0;border-radius:50% 0 0 50%"></div><div class="a" style="left:0px;top:45.5px;width:108px;height:12.5px;background:linear-gradient(90deg,#a050e0,#7050e0);"></div><div class="a" style="left:39px;top:49px;width:34px;height:1.5px;background:#e8d8ff;"></div><div class="a" style="left:48px;top:52.5px;width:18px;height:1.5px;background:#e8d8ff;"></div></div>
<div class="th" style="left:942px;top:585px;width:108px;height:72px;background:#fff"><div class="a" style="left:0px;top:0px;width:108px;height:72px;background:linear-gradient(160deg,#9a50f0 0%,#7a48e8 45%,#6440e0 100%);"></div><div class="a" style="left:83px;top:-2px;width:24px;height:24px;background:#c77ef0;border-radius:50% 40% 50% 50%"></div><div class="a" style="left:-10px;top:22px;width:28px;height:36px;background:transparent;border-radius:50%;border:8px solid #5a44e8"></div><div class="a" style="left:84px;top:30px;width:34px;height:40px;background:transparent;border-radius:50%;border:10px solid #4a72f0"></div><div class="a" style="left:3px;top:7px;width:7px;height:3px;background:#f07050;border-radius:50%"></div><div class="a" style="left:14px;top:11px;width:79px;height:49px;background:#1c1c28;"></div><div class="a" style="left:19px;top:12px;width:16px;height:2px;background:#eee;"></div><div class="a" style="left:19px;top:14.5px;width:16px;height:9px;background:linear-gradient(180deg,#e8b090,#8a5040);"></div><div class="a" style="left:19px;top:25px;width:16px;height:9px;background:#6a40e0;"></div><div class="a" style="left:28px;top:27px;width:4px;height:4px;background:#3ab0f0;border-radius:50%"></div><div class="a" style="left:19px;top:35px;width:16px;height:8px;background:#7a30e0;"></div><div class="a" style="left:22px;top:36px;width:8px;height:7px;background:#2a1030;border-radius:50%"></div><div class="a" style="left:19px;top:44px;width:16px;height:7px;background:linear-gradient(180deg,#d8b8d0,#a07090);"></div><div class="a" style="left:19px;top:52px;width:16px;height:7px;background:#e88060;"></div><div class="a" style="left:43px;top:15px;width:43px;height:24.5px;background:#8a50e8;"></div><div class="a" style="left:43px;top:21px;width:43px;text-align:center;font:bold 6.5px/8px 'Liberation Sans';color:#fff">clipchamp</div><div class="a" style="left:38px;top:47px;width:44px;height:1px;background:#fff;"></div><div class="a" style="left:56px;top:44px;width:14px;height:2px;background:#6a8af0;"></div><div class="a" style="left:38px;top:48.5px;width:42px;height:3.5px;background:linear-gradient(90deg,#f05080 0,#f05080 20%,#8a50e8 20%);"></div><div class="a" style="left:38px;top:53px;width:44px;height:1.2px;background:#3aa0f0;"></div><div class="a" style="left:73px;top:44px;width:8px;height:2px;background:#f07040;"></div></div>
<div class="c" style="left:203.5px;width:160px;top:333px"><span>Untitled design</span></div>
<div class="c" style="left:203.5px;width:160px;top:353px"><span>(54)</span></div>
<div class="c" style="left:346.5px;width:160px;top:333px"><span>clean boot</span></div>
<div class="c" style="left:489.5px;width:160px;top:333px"><span>disable</span></div>
<div class="c" style="left:489.5px;width:160px;top:353px"><span>touchscreen</span></div>
<div class="c" style="left:632.5px;width:160px;top:333px"><span>disable</span></div>
<div class="c" style="left:632.5px;width:160px;top:353px"><span>touchscreen 2</span></div>
<div class="c" style="left:775.5px;width:160px;top:333px"><span>mouse</span></div>
<div class="c" style="left:775.5px;width:160px;top:353px"><span>acceleration</span></div>
<div class="c" style="left:918.5px;width:160px;top:333px"><span>controller disable</span></div>
<div class="c" style="left:203.5px;width:160px;top:500.7px"><span>file explorer ad</span></div>
<div class="c" style="left:346.5px;width:160px;top:500.7px"><span>ads file explorer</span></div>
<div class="c" style="left:346.5px;width:160px;top:520.7px"><span>windows 1</span></div>
<div class="c" style="left:203.5px;width:160px;top:665.7px"><span>open clickchamp</span></div>
<div class="c" style="left:346.5px;width:160px;top:665.7px"><span>open MS Store</span></div>
<div class="c" style="left:489.5px;width:160px;top:665.7px"><span>download</span></div>
<div class="c" style="left:489.5px;width:160px;top:685.7px"><span>clickchamp</span></div>
<div class="c" style="left:632.5px;width:160px;top:665.7px"><span>clickchamp store</span></div>
<div class="c" style="left:775.5px;width:160px;top:665.7px"><span>clickchamp</span></div>
<div class="c" style="left:775.5px;width:160px;top:685.7px"><span>download</span></div>
<div class="c" style="left:918.5px;width:160px;top:665.7px"><span>Untitled design</span></div>
<div class="c" style="left:918.5px;width:160px;top:685.7px"><span>(53)</span></div>
<div class="a" style="left:0px;top:695px;width:1102px;height:29px;background:#1b1b1b;"></div>
<div class="t" style="left:17px;top:703.00px;transform:scaleX(0.91)">216 items</div>
<div class="a" style="left:93px;top:703px;width:1px;height:14px;background:#e8e8e8;"></div>
<div class="a" style="left:1045px;top:699px;width:20px;height:20px;background:#bdbdbd;border-radius:3px"></div>
<div class="a" style="left:1048px;top:703px;width:14px;height:1.3px;background:#000;"></div>
<div class="a" style="left:1048px;top:707px;width:14px;height:1.3px;background:#000;"></div>
<div class="a" style="left:1048px;top:711px;width:14px;height:1.3px;background:#000;"></div>
<div class="a" style="left:1048px;top:715px;width:14px;height:1.3px;background:#000;"></div>
<div class="a" style="left:1069px;top:695px;width:28px;height:29px;background:#6b6b6b;border:1px solid #9a9a9a;border-bottom:none"></div>
<div class="a" style="left:1074px;top:700px;width:20px;height:20px;background:#cbcbcb;border-radius:3px"></div>
<div class="a" style="left:1077px;top:703px;width:14px;height:12px;background:#fff;border:1.3px solid #000;border-radius:1.5px"></div>
<div class="a" style="left:1077px;top:716px;width:14px;height:1.3px;background:#000;"></div>
</div>
<div class="a" style="left:0;top:0;width:1102px;height:1px;background:linear-gradient(90deg,#4a7fd8,#7189b8 50%,#6a8cc4)"></div>
</body></html>
